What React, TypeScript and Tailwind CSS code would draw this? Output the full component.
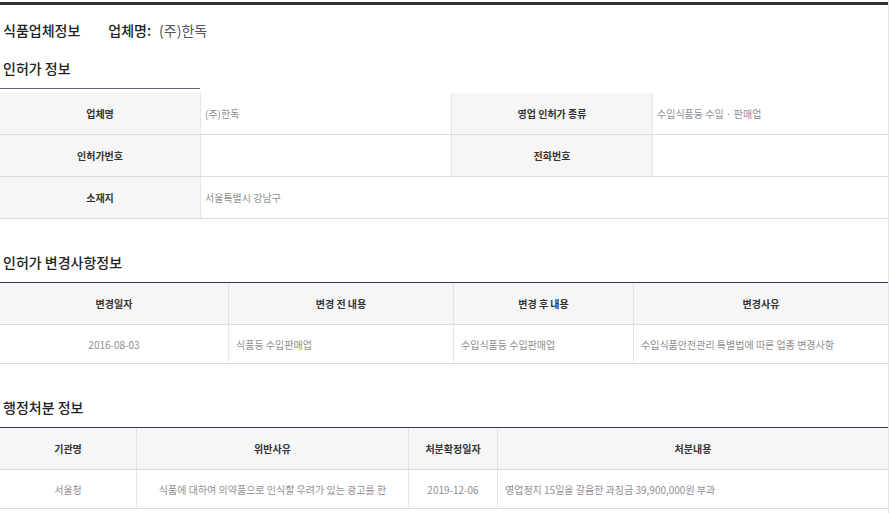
import React from 'react'

const font = { fontFamily: '"Noto Sans CJK KR", "Noto Sans", sans-serif' }

function Heading({ children, className = '' }: { children: React.ReactNode; className?: string }) {
  return (
    <div className={`h-[26px] flex items-center pl-[3px] text-[14px] font-medium text-[#222] ${className}`}>
      {children}
    </div>
  )
}

type Col = { w: string; head: string; value: string; align: 'center' | 'left' }

function ListTable({ cols }: { cols: Col[] }) {
  return (
    <div className="mt-[7px] border-t border-[#2f3d52]">
      <div className="flex h-[42px] border-b border-[#dcdcdc] bg-[#f6f6f6]">
        {cols.map((c, i) => (
          <div
            key={i}
            className={`${c.w} flex items-center justify-center text-[10px] font-semibold text-[#333] ${i > 0 ? 'border-l border-[#e1e1e1]' : ''}`}
          >
            {c.head}
          </div>
        ))}
      </div>
      <div className="flex h-[39px] border-b border-[#dcdcdc]">
        {cols.map((c, i) => (
          <div
            key={i}
            className={`${c.w} flex items-center text-[10px] text-[#8f8f8f] overflow-hidden whitespace-nowrap ${c.align === 'center' ? 'justify-center' : 'justify-start pl-[7px]'} ${i > 0 ? 'border-l border-[#e6e6e6]' : ''}`}
          >
            {c.value}
          </div>
        ))}
      </div>
    </div>
  )
}

export default function App() {
  const changes: Col[] = [
    { w: 'w-[228px]', head: '변경일자', value: '2016-08-03', align: 'center' },
    { w: 'w-[225px]', head: '변경 전 내용', value: '식품등 수입판매업', align: 'left' },
    { w: 'w-[180px]', head: '변경 후 내용', value: '수입식품등 수입판매업', align: 'left' },
    { w: 'w-[255px]', head: '변경사유', value: '수입식품안전관리 특별법에 따른 업종 변경사항', align: 'left' },
  ]
  const actions: Col[] = [
    { w: 'w-[136px]', head: '기관명', value: '서울청', align: 'center' },
    { w: 'w-[272px]', head: '위반사유', value: '식품에 대하여 의약품으로 인식할 우려가 있는 광고를 한', align: 'center' },
    { w: 'w-[89px]', head: '처분확정일자', value: '2019-12-06', align: 'center' },
    { w: 'w-[391px]', head: '처분내용', value: '영업정지 15일을 갈음한 과징금 39,900,000원 부과', align: 'left' },
  ]

  return (
    <div style={font} className="w-[889px] h-[513px] bg-white border-r border-[#e4e4e4] overflow-hidden">
      <div className="pt-[2px]">
        <div className="h-[3px] bg-[#333]" />
      </div>

      <div className="h-[50px] flex items-center pl-[3px] text-[14px]">
        <span className="font-medium text-[#222]">식품업체정보</span>
        <span className="ml-[28px] font-medium text-[#222]">업체명:</span>
        <span className="ml-[8px] text-[#555]">(주)한독</span>
      </div>

      <Heading>인허가 정보</Heading>
      <div className="mt-[7px] w-[200px] h-px bg-[#5b6473]" />

      <div className="mt-[4px] w-[888px] text-[10px]">
        <div className="flex h-[42px] border-b border-[#dcdcdc]">
          <div className="w-[200px] flex items-center justify-center bg-[#f6f6f6] font-semibold text-[#333]">업체명</div>
          <div className="w-[251px] flex items-center pl-[4px] border-l border-[#e6e6e6] text-[#8f8f8f]">(주)한독</div>
          <div className="w-[201px] flex items-center justify-center bg-[#f6f6f6] border-l border-[#e1e1e1] font-semibold text-[#333]">영업 인허가 종류</div>
          <div className="w-[236px] flex items-center pl-[4px] border-l border-[#e6e6e6] text-[#8f8f8f]">수입식품등 수입 · 판매업</div>
        </div>
        <div className="flex h-[42px] border-b border-[#dcdcdc]">
          <div className="w-[200px] flex items-center justify-center bg-[#f6f6f6] font-semibold text-[#333]">인허가번호</div>
          <div className="w-[251px] border-l border-[#e6e6e6]" />
          <div className="w-[201px] flex items-center justify-center bg-[#f6f6f6] border-l border-[#e1e1e1] font-semibold text-[#333]">전화번호</div>
          <div className="w-[236px] border-l border-[#e6e6e6]" />
        </div>
        <div className="flex h-[42px] border-b border-[#dcdcdc]">
          <div className="w-[200px] flex items-center justify-center bg-[#f6f6f6] font-semibold text-[#333]">소재지</div>
          <div className="flex-1 flex items-center pl-[4px] border-l border-[#e6e6e6] text-[#8f8f8f]">서울특별시 강남구</div>
        </div>
      </div>

      <Heading className="mt-[30px]">인허가 변경사항정보</Heading>
      <ListTable cols={changes} />

      <Heading className="mt-[30px]">행정처분 정보</Heading>
      <ListTable cols={actions} />
    </div>
  )
}
